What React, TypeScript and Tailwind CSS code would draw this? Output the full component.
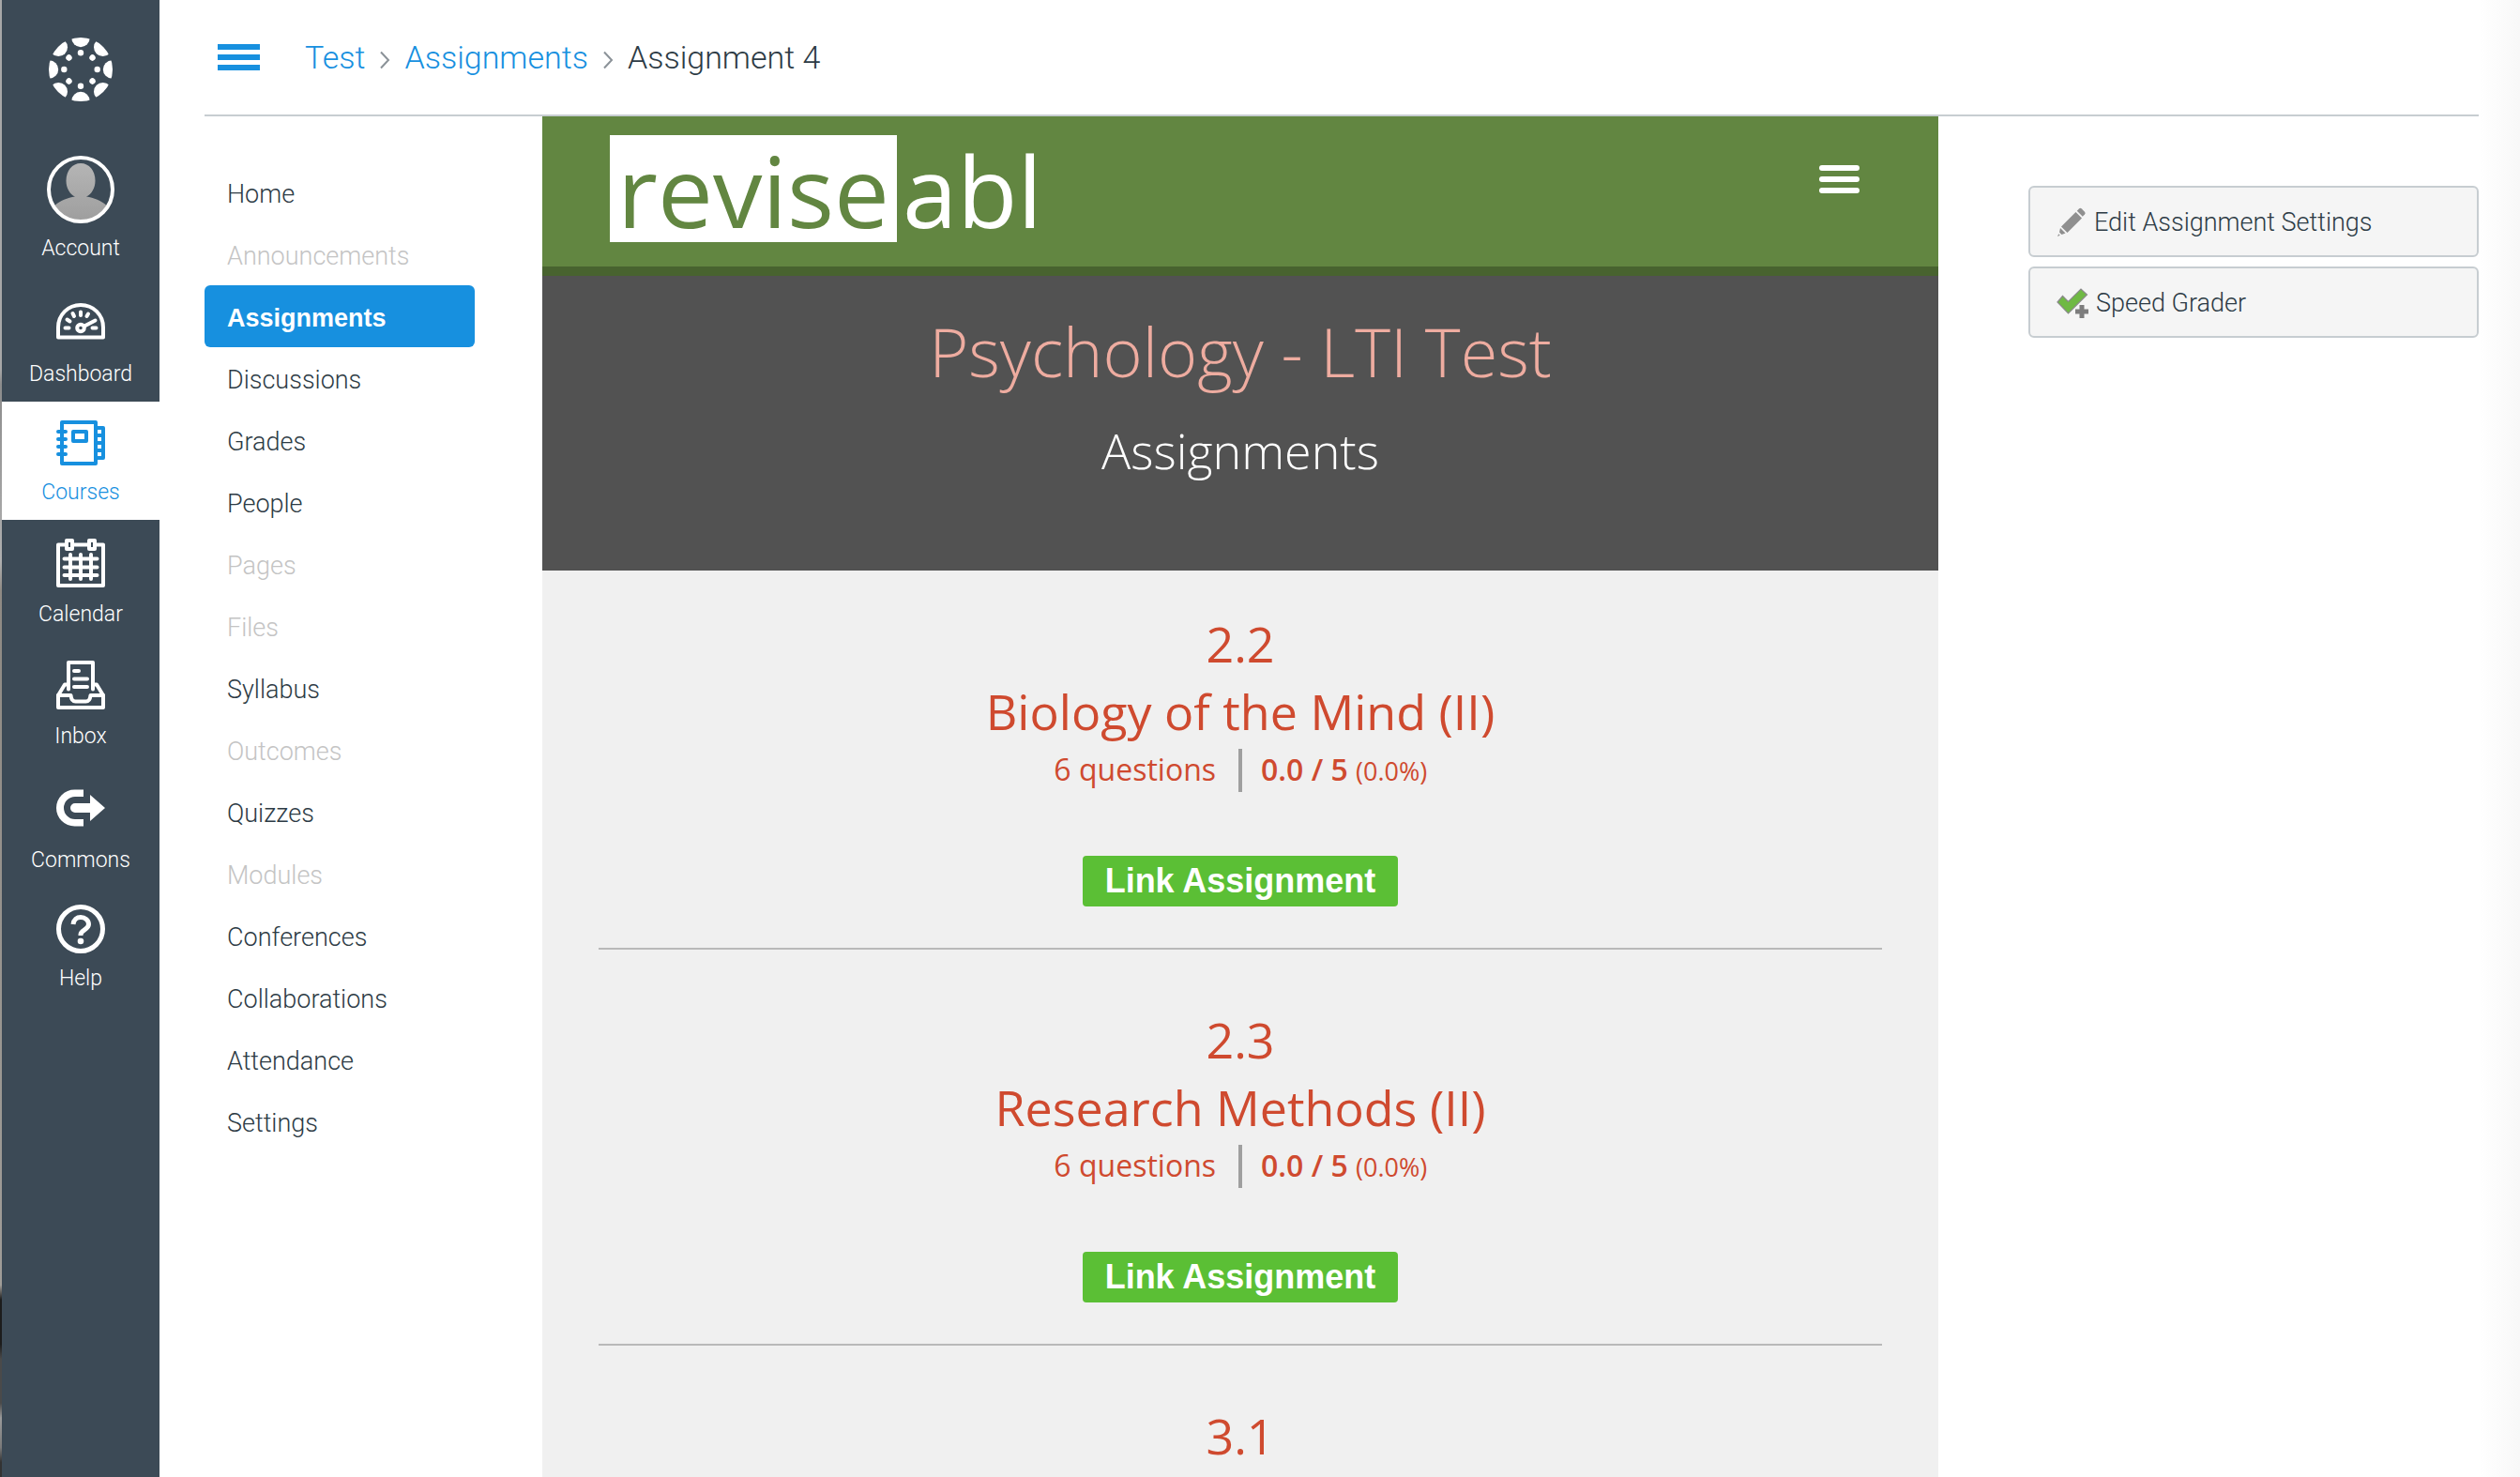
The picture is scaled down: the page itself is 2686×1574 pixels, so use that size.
import React from "react";

const sans = "font-['Roboto','Liberation_Sans',sans-serif] font-light";
const open = "font-['Open_Sans','Noto_Sans',sans-serif]";

function CanvasLogo() {
  const angles = [0, 45, 90, 135, 180, 225, 270, 315];
  return (
    <svg viewBox="0 0 68 68" className="size-[68px]" aria-hidden="true">
      <defs>
        <clipPath id="logo-disc">
          <circle cx="34" cy="34" r="34" />
        </clipPath>
      </defs>
      <g fill="#fff" clipPath="url(#logo-disc)">
        {angles.map((a) => (
          <g key={a} transform={`rotate(${a} 34 34)`}>
            <circle cx="34" cy="0.5" r="9.7" />
            <circle cx="34" cy="16.3" r="3.2" />
          </g>
        ))}
      </g>
    </svg>
  );
}

function Avatar() {
  return (
    <svg viewBox="0 0 72 72" className="size-[72px]" aria-hidden="true">
      <defs>
        <linearGradient id="person" x1="0" y1="0" x2="0" y2="1">
          <stop offset="0" stopColor="#b5b5b5" />
          <stop offset="1" stopColor="#9d9d9d" />
        </linearGradient>
        <clipPath id="avatar-disc">
          <circle cx="36" cy="36" r="33" />
        </clipPath>
      </defs>
      <path
        clipPath="url(#avatar-disc)"
        fill="url(#person)"
        d="M36 8c-9 0-15.500 8-15.500 18.500 0 8 4 14.500 9.500 17-8 1.500-16 4-21.500 9.500V72h55V53c-5.500-5.500-13.500-8-21.500-9.500 5.500-2.500 9.500-9 9.500-17C51.500 16 45 8 36 8z"
      />
      <circle cx="36" cy="36" r="34" fill="none" stroke="#fff" strokeWidth="4" />
    </svg>
  );
}

const iconProps = {
  viewBox: "0 0 52 52",
  className: "size-[52px]",
  fill: "none",
  stroke: "currentColor",
  strokeWidth: 4,
  strokeLinecap: "round" as const,
  strokeLinejoin: "round" as const,
  "aria-hidden": true,
};

function DashboardIcon() {
  return (
    <svg {...iconProps}>
      <path d="M2 41.500V31C2 17.500 12.500 7 26 7s24 10.500 24 24v10.500z" />
      <circle cx="26" cy="31.500" r="3.800" />
      <path d="M30 29.500l11.500-6M9.500 31.500h4M38.500 31.500h4M11.500 22.500l3 2M17.500 16l1.500 3M26 14.500v3.500M34 16.500l-1.500 2.500" />
    </svg>
  );
}

function CoursesIcon() {
  return (
    <svg {...iconProps} viewBox="0 0 52 48" className="h-12 w-[52px]">
      <path d="M6 2h36v44H6z" />
      <path d="M18 12h14v10H18z" />
      <path d="M2 12h8M2 20h8M2 28h8M2 36h8" />
      <path d="M42 8h8v32h-8M42 16h8M42 24h8M42 32h8" />
    </svg>
  );
}

function CalendarIcon() {
  return (
    <svg {...iconProps}>
      <path d="M10 6.500H2V50h48V6.500h-8M18.500 6.500h15" />
      <path d="M11 2h6v9h-6zM35 2h6v9h-6z" />
      <path d="M8.500 21.500h35M8.500 30.500h35M8.500 39h35M15 17v26M26 17v26M37 17v26" />
    </svg>
  );
}

function InboxIcon() {
  return (
    <svg {...iconProps}>
      <path d="M2 37v13h48V37H36.500c-.5 5-2 6.500-5 6.500h-11c-3 0-4.500-1.500-5-6.500z" />
      <path d="M2 37l7-11.500h3M50 37l-7-11.500h-3M13 30.500V2h26v28.500" />
      <path d="M19 11h5M19 19.500h14M19 28h14" />
    </svg>
  );
}

function CommonsIcon() {
  return (
    <svg viewBox="0 0 52 52" className="size-[52px]" fill="currentColor" aria-hidden="true">
      <path d="M29 5.500H19.500a19.500 19.500 0 0 0 0 39H29V37h-9a12 12 0 0 1 0-24h9z" />
      <path d="M36 11l16 14-16 14v-9H20a5 5 0 0 1 0-10h16z" />
    </svg>
  );
}

function HelpIcon() {
  return (
    <svg {...iconProps} strokeWidth={5}>
      <circle cx="26" cy="26" r="23.500" />
      <path d="M18 21c.5-5 4-7.500 8-7.500 4.500 0 8.500 3 8.500 7.500 0 6-8.500 5.500-8.500 11v1" strokeLinecap="butt" />
      <circle cx="26" cy="39" r="3.300" fill="currentColor" stroke="none" />
    </svg>
  );
}

const globalItems = [
  { label: "Account", icon: <Avatar />, box: "h-[132px] gap-3" },
  { label: "Dashboard", icon: <DashboardIcon />, box: "pt-5 h-[130px] gap-[14px]" },
  { label: "Courses", icon: <CoursesIcon />, box: "pt-5 h-[126px] gap-[14px]", active: true },
  { label: "Calendar", icon: <CalendarIcon />, box: "pt-5 h-[130px] gap-[14px]" },
  { label: "Inbox", icon: <InboxIcon />, box: "pt-5 h-[132px] gap-[14px]" },
  { label: "Commons", icon: <CommonsIcon />, box: "pt-5 h-32 gap-[14px]" },
  { label: "Help", icon: <HelpIcon />, box: "pt-5 h-32 gap-3" },
];

function GlobalNav() {
  return (
    <nav aria-label="Global" className="w-[168px] shrink-0 bg-[#3c4a56] text-white">
      <a href="#home" aria-label="Canvas" className="flex justify-center pt-10 pb-[58px]">
        <CanvasLogo />
      </a>
      <ul>
        {globalItems.map((item) => (
          <li key={item.label}>
            <a
              href={`#${item.label.toLowerCase()}`}
              className={`flex flex-col items-center ${item.box} ${
                item.active ? "bg-white text-[#1790df]" : ""
              }`}
            >
              {item.icon}
              <span className="text-[23px] leading-[30px]">{item.label}</span>
            </a>
          </li>
        ))}
      </ul>
    </nav>
  );
}

function Chevron() {
  return (
    <li aria-hidden="true" className="mx-[15px] pt-1.5">
      <svg viewBox="0 0 12 20" className="h-5 w-3" fill="none" stroke="#8b9298" strokeWidth="2">
        <path d="M2 1.500l8 8.500-8 8.500" />
      </svg>
    </li>
  );
}

function Breadcrumbs() {
  return (
    <header className="flex h-[124px] shrink-0 items-center border-b-2 border-[#c7cdd1] pl-[14px]">
      <button type="button" aria-label="Toggle course navigation" className="flex w-[45px] flex-col gap-[5px]">
        <span className="h-1.5 bg-[#1790df]" />
        <span className="h-1.5 bg-[#1790df]" />
        <span className="h-1.5 bg-[#1790df]" />
      </button>
      <nav aria-label="Breadcrumb" className="ml-12">
        <ol className="flex items-center text-[34px] leading-10">
          <li>
            <a href="#test" className="text-[#1790df]">Test</a>
          </li>
          <Chevron />
          <li>
            <a href="#assignments" className="text-[#1790df]">Assignments</a>
          </li>
          <Chevron />
          <li className="text-[#2d3b45]">Assignment 4</li>
        </ol>
      </nav>
    </header>
  );
}

const courseItems = [
  { label: "Home" },
  { label: "Announcements", muted: true },
  { label: "Assignments", active: true },
  { label: "Discussions" },
  { label: "Grades" },
  { label: "People" },
  { label: "Pages", muted: true },
  { label: "Files", muted: true },
  { label: "Syllabus" },
  { label: "Outcomes", muted: true },
  { label: "Quizzes" },
  { label: "Modules", muted: true },
  { label: "Conferences" },
  { label: "Collaborations" },
  { label: "Attendance" },
  { label: "Settings" },
];

function CourseNav() {
  return (
    <nav aria-label="Course" className="w-72 shrink-0 pt-12">
      <ul>
        {courseItems.map((item) => (
          <li key={item.label}>
            <a
              href={`#${item.label.toLowerCase()}`}
              className={`flex h-[66px] items-center rounded-md px-6 pt-1 text-[27px] leading-8 ${
                item.active
                  ? "bg-[#1790df] font-['Liberation_Sans',sans-serif] font-bold text-white"
                  : item.muted
                    ? "text-[#c4c4c4]"
                    : "text-[#2d3b45]"
              }`}
            >
              {item.label}
            </a>
          </li>
        ))}
      </ul>
    </nav>
  );
}

type Assignment = { number: string; title?: string };

const assignments: Assignment[] = [
  { number: "2.2", title: "Biology of the Mind (II)" },
  { number: "2.3", title: "Research Methods (II)" },
  { number: "3.1" },
];

function AssignmentCard({ number, title }: Assignment) {
  if (!title) {
    return <li className="text-center text-[52px] leading-[72px] text-[#cf4a2f]">{number}</li>;
  }
  return (
    <li className="flex flex-col items-center border-b-2 border-[#b9b9b9] pb-11 text-[#cf4a2f]">
      <h3 className="text-center text-[52px] leading-[72px]">
        {number}
        <br />
        {title}
      </h3>
      <p className="mt-1 grid w-full grid-cols-2 text-[32px] leading-[44px]">
        <span className="border-r-2 border-[#9f9f9f] pr-6 text-right">6 questions</span>
        <span className="border-l-2 border-[#9f9f9f] pl-5">
          <b className="font-semibold">0.0 / 5</b> <span className="text-[27px]">(0.0%)</span>
        </span>
      </p>
      <button
        type="button"
        className="mt-[68px] h-[54px] rounded bg-[#5bbf35] px-6 font-['Liberation_Sans',sans-serif] text-[36px] leading-[54px] font-bold text-white"
      >
        Link Assignment
      </button>
    </li>
  );
}

function ReviseAbl() {
  return (
    <main className={`min-w-0 flex-1 bg-[#f0f0f0] font-normal ${open}`}>
      <div className="flex h-[170px] items-start justify-between border-b-[10px] border-[#48632f] bg-[#628641] pt-5 pr-[84px] pl-[72px]">
        <div className="flex text-[105px] leading-[118px] font-medium">
          <span className="h-[114px] w-[306px] bg-white text-center text-[#628641]">revise</span>
          <span className="pl-1.5 text-white">abl</span>
        </div>
        <button type="button" aria-label="Menu" className="mt-8 flex w-[43px] flex-col gap-1.5">
          <span className="h-1.5 rounded-sm bg-white" />
          <span className="h-1.5 rounded-sm bg-white" />
          <span className="h-1.5 rounded-sm bg-white" />
        </button>
      </div>
      <div className="h-[314px] bg-[#525252] pt-[30px] text-center font-light">
        <h1 className="text-[72px] leading-[100px] text-[#eeaca0]">Psychology - LTI Test</h1>
        <h2 className="pt-5 text-[52px] leading-[72px] text-white">Assignments</h2>
      </div>
      <ul className="flex flex-col gap-[60px] px-[60px] pt-[42px]">
        {assignments.map((a) => (
          <AssignmentCard key={a.number} {...a} />
        ))}
      </ul>
    </main>
  );
}

function PencilIcon() {
  return (
    <svg viewBox="0 0 32 32" className="size-8" fill="#8f8f8f" aria-hidden="true">
      <path d="M24 1.500a2 2 0 0 1 2.800 0l3.200 3.200a2 2 0 0 1 0 2.800l-2.200 2.200-6-6z" />
      <path d="M20.500 5l6.500 6.500L11.500 27 5 20.500z" />
      <path d="M4 22l5.500 5.500-4 1.500-2.500-2.500z" />
      <path d="M2.200 28.300l1.500 1.500L1 31z" />
    </svg>
  );
}

function SpeedGraderIcon() {
  return (
    <svg viewBox="0 0 34 32" className="h-8 w-[34px]" aria-hidden="true">
      <path d="M1 15l5.500-6.500 6 6L26 1l6.500 6L12.500 27z" fill="#6fb944" stroke="#8a8a8a" strokeWidth="1.200" />
      <path d="M24.500 18h5v4.500H34v5h-4.500V32h-5v-4.500H20v-5h4.500z" fill="#7d7d7d" />
    </svg>
  );
}

function RightSide() {
  const button =
    "flex h-[76px] w-full items-center gap-2 rounded-md border-2 border-[#c7cdd1] bg-[#f5f5f5] px-7 pt-0.5 text-[27px] leading-8 text-[#2d3b45]";
  return (
    <aside className="flex w-[480px] shrink-0 flex-col gap-2.5 pt-[74px]">
      <button type="button" className={button}>
        <PencilIcon />
        Edit Assignment Settings
      </button>
      <button type="button" className={button}>
        <SpeedGraderIcon />
        Speed Grader
      </button>
    </aside>
  );
}

export default function App() {
  return (
    <div className={`flex h-screen overflow-hidden bg-white ${sans}`}>
      <div className="w-0.5 shrink-0 bg-[linear-gradient(to_bottom,#a8a8a8_0%,#a8a8a8_25%,#8c8c8c_26%,#b0b0b0_38%,#8f8a84_40%,#a09d98_87%,#1c1c1c_88%,#1c1c1c_91%,#4a4a4a_92%,#4a4a4a_95%,#9a9a9a_96%,#7a7a7a_98%,#333_99%)]" />
      <GlobalNav />
      <div className="ml-12 flex min-w-0 flex-1 flex-col">
        <Breadcrumbs />
        <div className="flex flex-1">
          <CourseNav />
          <div className="ml-[72px] flex min-w-0 flex-1 gap-24">
            <ReviseAbl />
            <RightSide />
          </div>
        </div>
      </div>
      <div className="w-11 shrink-0 bg-linear-to-r from-white to-[#f8f8f8]" />
    </div>
  );
}
